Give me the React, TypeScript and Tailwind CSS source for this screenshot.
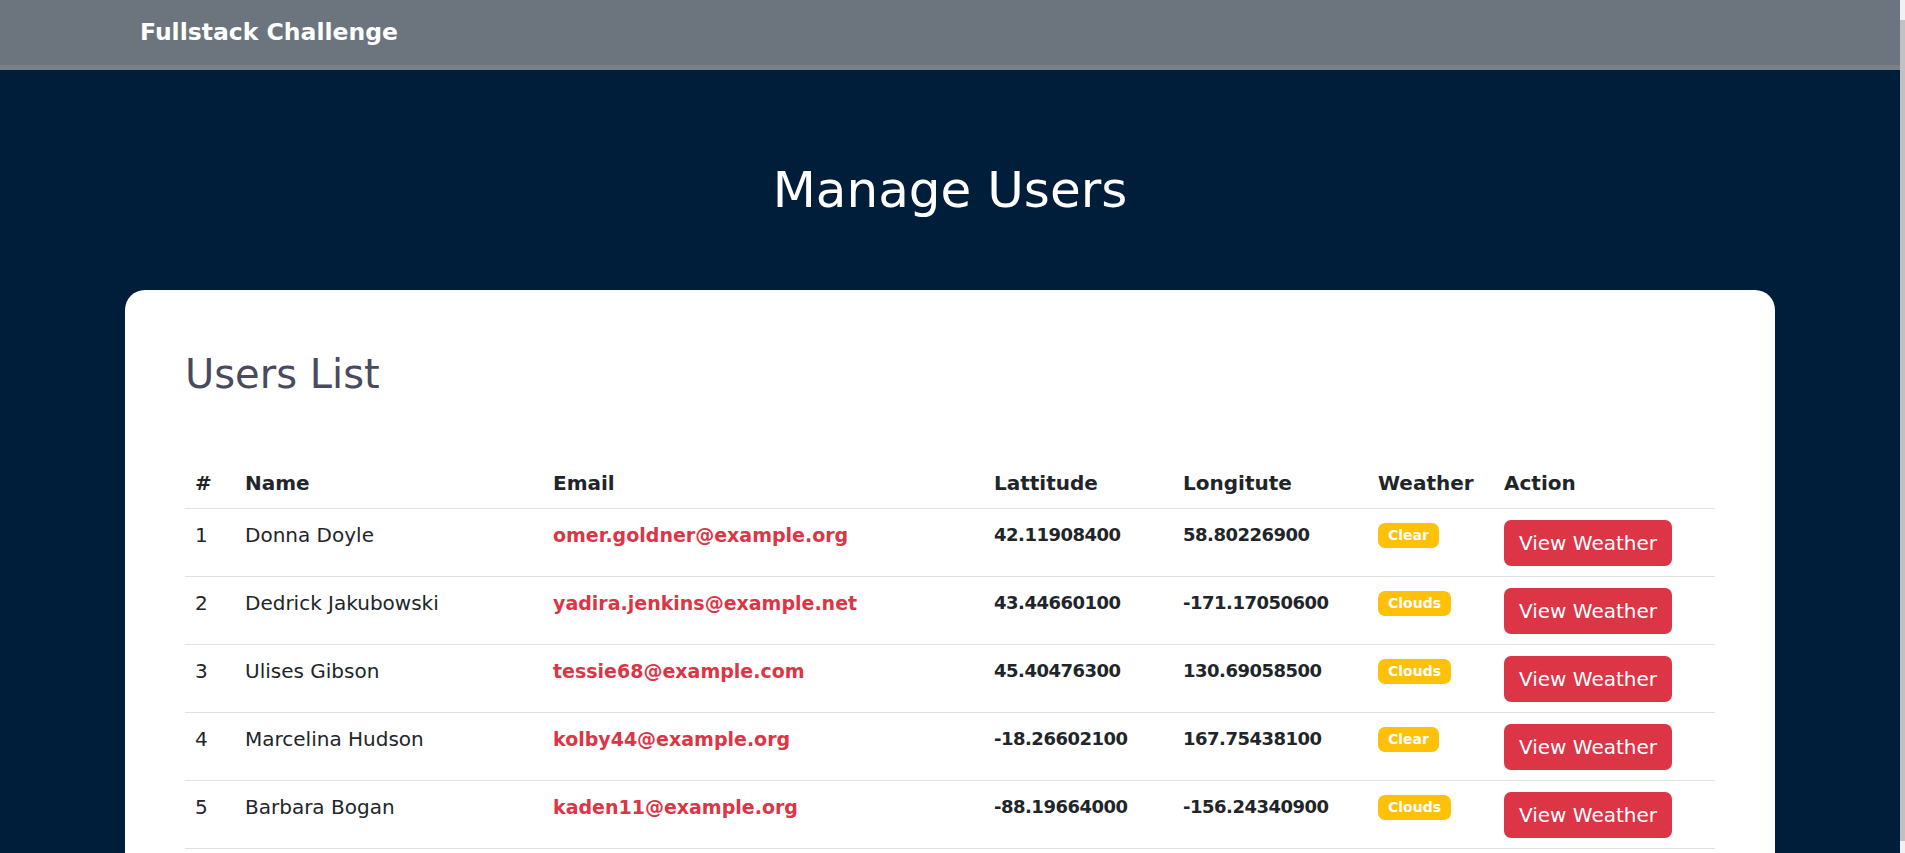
import React from 'react';

interface User {
  id: number;
  name: string;
  email: string;
  lat: string;
  lng: string;
  weather: string;
}

const users: User[] = [
  { id: 1, name: 'Donna Doyle', email: 'omer.goldner@example.org', lat: '42.11908400', lng: '58.80226900', weather: 'Clear' },
  { id: 2, name: 'Dedrick Jakubowski', email: 'yadira.jenkins@example.net', lat: '43.44660100', lng: '-171.17050600', weather: 'Clouds' },
  { id: 3, name: 'Ulises Gibson', email: 'tessie68@example.com', lat: '45.40476300', lng: '130.69058500', weather: 'Clouds' },
  { id: 4, name: 'Marcelina Hudson', email: 'kolby44@example.org', lat: '-18.26602100', lng: '167.75438100', weather: 'Clear' },
  { id: 5, name: 'Barbara Bogan', email: 'kaden11@example.org', lat: '-88.19664000', lng: '-156.24340900', weather: 'Clouds' },
];

const columns = ['#', 'Name', 'Email', 'Lattitude', 'Longitute', 'Weather', 'Action'];

export default function App() {
  return (
    <div className="h-[853px] flex overflow-hidden bg-[#001e3a] font-['DejaVu_Sans',sans-serif] text-[#212529]">
      <div className="w-[1900px] shrink-0">
        {/* navbar */}
        <nav className="h-[70px] bg-[#6c757d] border-b-[5px] border-[#78808a] flex items-center px-[140px]">
          <span className="text-[23.5px] font-bold text-white">Fullstack Challenge</span>
        </nav>

        <main className="pt-[90px] pb-[60px]">
          <h1 className="text-center text-[50px] leading-[60px] text-white">Manage Users</h1>

          <div className="mx-[125px] mt-[70px] bg-white rounded-[20px] p-[60px]">
            <h2 className="text-[40px] leading-[48px] text-[#4a4a5f] mb-[60px]">Users List</h2>

            <table className="w-full table-fixed border-collapse">
              <colgroup>
                <col className="w-[50px]" />
                <col className="w-[308px]" />
                <col className="w-[441px]" />
                <col className="w-[189px]" />
                <col className="w-[195px]" />
                <col className="w-[126px]" />
                <col />
              </colgroup>
              <thead>
                <tr className="border-b border-[#dee2e6]">
                  {columns.map((c) => (
                    <th key={c} className="text-left align-top px-[10px] pt-[10px] pb-[10px] text-[20px] leading-[30px] font-bold">
                      {c}
                    </th>
                  ))}
                </tr>
              </thead>
              <tbody>
                {users.map((u) => (
                  <tr key={u.id} className="border-b border-[#dee2e6]">
                    <td className="align-top px-[10px] pt-[11px] pb-[10px] text-[20px] leading-[30px]">{u.id}</td>
                    <td className="align-top px-[10px] pt-[11px] pb-[10px] text-[20px] leading-[30px]">{u.name}</td>
                    <td className="align-top px-[10px] pt-[11px] pb-[10px] text-[19px] leading-[30px] font-bold text-[#dc3545]">{u.email}</td>
                    <td className="align-top px-[10px] pt-[11px] pb-[10px] text-[18px] leading-[30px] font-bold tracking-[-0.5px]">{u.lat}</td>
                    <td className="align-top px-[10px] pt-[11px] pb-[10px] text-[18px] leading-[30px] font-bold tracking-[-0.5px]">{u.lng}</td>
                    <td className="align-top px-[10px] pt-[11px] pb-[10px]">
                      <span className="inline-block mt-[3px] rounded-[7px] bg-[#ffc107] px-[10px] py-[5px] text-[14px] leading-[15px] font-bold text-white">
                        {u.weather}
                      </span>
                    </td>
                    <td className="align-top px-[10px] pt-[11px] pb-[10px]">
                      <button className="h-[46px] rounded-[7px] bg-[#dc3545] px-[15px] text-[20px] leading-[30px] text-white">
                        View Weather
                      </button>
                    </td>
                  </tr>
                ))}
              </tbody>
            </table>
          </div>
        </main>
      </div>

      {/* thin page scrollbar */}
      <div className="w-[5px] shrink-0 bg-[#f1f1f1] pt-[20px] pb-[12px] flex">
        <div className="flex-1 bg-[#c1c1c1]" />
      </div>
    </div>
  );
}
